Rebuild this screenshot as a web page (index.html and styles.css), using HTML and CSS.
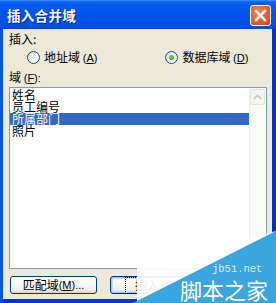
FILE: index.html
```html
<!DOCTYPE html>
<html>
<head>
<meta charset="utf-8">
<link rel="stylesheet" href="styles.css">
</head>
<body>
<div class="win">
  <div class="titlebar">
    <span class="title">插入合并域</span>
    <span class="close"><svg width="13" height="13" viewBox="0 0 13 13"><path d="M2 2 L11 11 M11 2 L2 11" stroke="#fff" stroke-width="2.4" stroke-linecap="square"/></svg></span>
  </div>
  <div class="client">
    <div class="lbl lbl-top">插入:</div>
    <div class="radios">
      <label class="radio r1"><span class="rb"></span><span>地址域 <span class="acc">(<u>A</u>)</span></span></label>
      <label class="radio r2"><span class="rb on"></span><span>数据库域 <span class="acc">(<u>D</u>)</span></span></label>
    </div>
    <div class="lbl">域 <span class="acc">(<u>F</u>):</span></div>
    <div class="listbox">
      <ul class="items">
        <li>姓名</li>
        <li>员工编号</li>
        <li class="sel">所属部门</li>
        <li>照片</li>
      </ul>
      <div class="scroll">
        <div class="sbtn"><svg width="9" height="6" viewBox="0 0 9 6"><path d="M1 5 L4.5 1.5 L8 5" fill="none" stroke="#c9c7ba" stroke-width="1.6"/></svg></div>
      </div>
    </div>
    <div class="buttons">
      <div class="btn">匹配域 <span class="acc">(<u>M</u>)...</span></div>
      <div class="btn focus"><span class="fr">插入 <span class="acc">(<u>I</u>)</span></span></div>
    </div>
  </div>
  <div class="wm">
    <svg width="148" height="77" viewBox="0 0 148 77">
      <polygon points="148,5 9,42 9,77 148,77" fill="#ffffff" fill-opacity="0.93"/>
      <polygon points="148,5 5,77 148,77" fill="#3aa6de"/>
    </svg>
    <span class="wm-url">jb51.net</span>
    <span class="wm-name">脚本之家</span>
  </div>
</div>
</body>
</html>
```
FILE: styles.css
```css
html, body {
  margin: 0;
  padding: 0;
  background: #ece9d8;
}
.win {
  position: relative;
  width: 276px;
  height: 303px;
  display: flex;
  flex-direction: column;
  overflow: hidden;
  font-family: "Noto Sans CJK SC", "Liberation Sans", sans-serif;
  font-size: 12px;
  color: #000;
}
.acc {
  font-family: "Liberation Sans", sans-serif;
  font-size: 11px;
}
.titlebar {
  height: 29px;
  flex: none;
  box-sizing: border-box;
  display: flex;
  align-items: center;
  justify-content: space-between;
  padding: 0 5px 0 7px;
  background: linear-gradient(to bottom, #3d95ff 0, #0a5fef 2px, #0058ee 6px, #0054e8 18px, #0050e0 26px, #0046cf 29px);
}
.title {
  color: #fff;
  font-weight: bold;
  font-size: 13.5px;
  letter-spacing: 0.3px;
  line-height: 16px;
  margin-top: 1px;
  text-shadow: 1px 1px 0 #0a1e8c;
}
.close {
  width: 21px;
  height: 21px;
  box-sizing: border-box;
  border: 1px solid #fff;
  border-radius: 3px;
  background: radial-gradient(circle at 40% 35%, #f08a60 0, #e15a2c 60%, #c8401a 100%);
  display: flex;
  align-items: center;
  justify-content: center;
  margin-top: 2px;
}
.client {
  flex: 1;
  display: flex;
  flex-direction: column;
  background: #ece9d8;
  border-left: 3px solid #0855dd;
  border-right: 4px solid #0a2fc8;
  border-bottom: 4px solid #0831d9;
  padding: 3px 5px 0 6px;
}
.lbl {
  height: 14px;
  line-height: 14px;
  white-space: nowrap;
}
u {
  text-decoration: underline;
  text-underline-offset: 1px;
}
.radios {
  height: 14px;
  margin-top: 4px;
  margin-bottom: 6px;
  display: flex;
  align-items: center;
}
.radio {
  display: flex;
  align-items: center;
  gap: 4px;
  line-height: 14px;
  white-space: nowrap;
}
.r1 {
  margin-left: 18px;
}
.r2 {
  margin-left: 68px;
}
.rb {
  width: 13px;
  height: 13px;
  box-sizing: border-box;
  border-radius: 50%;
  border: 1px solid #1c5180;
  background: radial-gradient(circle at 65% 65%, #ffffff 0, #f4f3ee 40%, #d8d5c8 100%);
  position: relative;
}
.rb.on::after {
  content: "";
  position: absolute;
  left: 3px;
  top: 3px;
  width: 5px;
  height: 5px;
  border-radius: 50%;
  background: radial-gradient(circle at 40% 40%, #7be07b 0, #21a121 70%, #1a8a1a 100%);
}
.listbox {
  margin-top: 3px;
  height: 182px;
  box-sizing: border-box;
  border: 1px solid #7f9db9;
  background: #fff;
  display: flex;
  width: 258px;
}
.items {
  list-style: none;
  margin: 0;
  padding: 0;
  flex: 1;
}
.items li {
  height: 12px;
  line-height: 12px;
  font-size: 12px;
  padding-left: 2px;
  white-space: nowrap;
}
.items li:first-child {
  margin-top: 1px;
}
.items li.sel {
  background: #316ac5;
  color: #fff;
}
.scroll {
  width: 17px;
  flex: none;
  background: #fbfbf8;
  border-left: 1px solid #f0efe8;
  box-sizing: border-box;
  padding: 1px 1px 0 0;
}
.sbtn {
  height: 16px;
  box-sizing: border-box;
  border: 1px solid #e8e6da;
  border-radius: 2px;
  background: #f5f4ee;
  display: flex;
  align-items: center;
  justify-content: center;
}
.buttons {
  margin-top: 7px;
  display: flex;
  gap: 13px;
  padding-left: 1px;
}
.btn {
  width: 87px;
  height: 18px;
  box-sizing: border-box;
  border: 1px solid #003c74;
  border-radius: 3px;
  background: linear-gradient(to bottom, #ffffff 0, #f7f7f3 50%, #ecebe6 85%, #d6d0c5 100%);
  display: flex;
  align-items: center;
  justify-content: center;
  line-height: 12px;
  white-space: nowrap;
}
.btn.focus {
  box-shadow: inset 0 0 0 1px #a9c3f1, inset 0 0 0 2px #cfdcf5;
}
.fr {
  outline: 1px dotted #000;
  outline-offset: 1px;
  padding: 0 8px;
}
.wm {
  position: absolute;
  right: 0;
  bottom: 0;
  width: 148px;
  height: 77px;
}
.wm svg {
  display: block;
}
.wm-url {
  position: absolute;
  left: 84px;
  top: 37px;
  font-family: "Liberation Mono", "DejaVu Sans Mono", monospace;
  font-size: 10.5px;
  line-height: 12px;
  color: #dff2ff;
}
.wm-name {
  position: absolute;
  left: 52px;
  top: 51px;
  font-family: "Noto Sans CJK SC", sans-serif;
  font-size: 22px;
  line-height: 24px;
  color: #ffffff;
  white-space: nowrap;
}
```
